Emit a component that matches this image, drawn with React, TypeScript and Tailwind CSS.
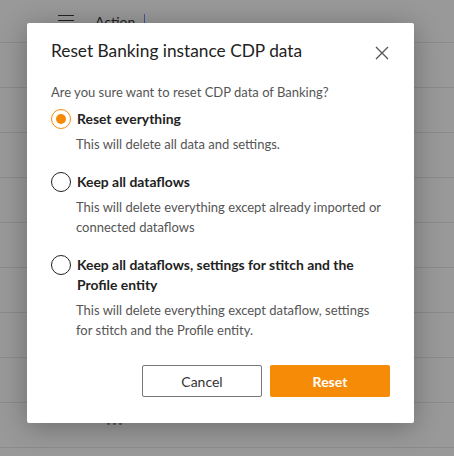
import React from "react";

const font = { fontFamily: "Lato, 'Noto Sans', sans-serif" };

function Radio({ checked }: { checked?: boolean }) {
  return checked ? (
    <span className="flex h-5 w-5 shrink-0 items-center justify-center rounded-full border-[1.5px] border-[#f58a07]">
      <span className="h-[10px] w-[10px] rounded-full bg-[#f58a07]" />
    </span>
  ) : (
    <span className="h-5 w-5 shrink-0 rounded-full border-[1.5px] border-[#222]" />
  );
}

function Option({
  checked,
  label,
  desc,
  className,
}: {
  checked?: boolean;
  label: React.ReactNode;
  desc: React.ReactNode;
  className?: string;
}) {
  return (
    <div className={className}>
      <div className="flex items-start gap-[6px]">
        <Radio checked={checked} />
        <div className="text-[13.9px] font-bold leading-5 text-[#222]">{label}</div>
      </div>
      <div className="mt-[5px] pl-[25px] pr-1 text-[13px] leading-5 text-[#555]">{desc}</div>
    </div>
  );
}

export default function App() {
  const rows = Array.from({ length: 9 });
  return (
    <div className="relative h-[456px] w-[454px] overflow-hidden bg-[#999]" style={font}>
      <div className="flex h-[43px] items-center border-b border-[#8b8b8b]">
        <div className="ml-[58px] flex w-4 flex-col gap-[4px] self-start pt-[15px]">
          <span className="h-[1px] bg-[#222]" />
          <span className="h-[1px] bg-[#222]" />
          <span className="h-[1px] bg-[#222]" />
        </div>
        <span className="ml-[21px] text-[14px] text-[#222]">Action</span>
        <span className="ml-[9px] h-[14px] w-[1px] bg-[#3a5a9a]" />
      </div>
      {rows.map((_, i) => (
        <div key={i} className="h-[45px] border-b border-[#8b8b8b]" />
      ))}
      <div className="absolute left-[107px] top-[422px] flex gap-[3px]">
        <span className="h-[3px] w-[3px] rounded-full bg-[#555]" />
        <span className="h-[3px] w-[3px] rounded-full bg-[#555]" />
        <span className="h-[3px] w-[3px] rounded-full bg-[#555]" />
      </div>

      <div className="absolute left-[27px] top-[23px] h-[400px] w-[387px] rounded-[2px] bg-white px-6 pt-4 shadow-[0_4px_28px_rgba(0,0,0,0.3)]">
        <div className="flex items-center justify-between">
          <h2 className="text-[17.3px] leading-6 text-[#222]">Reset Banking instance CDP data</h2>
          <svg width="14" height="14" viewBox="0 0 14 14" className="mr-[1px] mt-[3px]">
            <path d="M1 1L13 13M13 1L1 13" stroke="#555" strokeWidth="1.3" />
          </svg>
        </div>
        <p className="mt-[19px] text-[13px] leading-5 text-[#555]">
          Are you sure want to reset CDP data of Banking?
        </p>
        <Option
          className="mt-[7px]"
          checked
          label="Reset everything"
          desc="This will delete all data and settings."
        />
        <Option
          className="mt-[18px]"
          label="Keep all dataflows"
          desc="This will delete everything except already imported or connected dataflows"
        />
        <Option
          className="mt-[18px]"
          label="Keep all dataflows, settings for stitch and the Profile entity"
          desc="This will delete everything except dataflow, settings for stitch and the Profile entity."
        />
        <div className="mt-[25px] flex justify-end gap-2">
          <button className="h-[32px] w-[120px] rounded-[2px] border border-[#777] bg-white text-[14px] text-[#333]">
            Cancel
          </button>
          <button className="h-[32px] w-[120px] rounded-[2px] bg-[#f68b07] text-[14px] font-bold text-white">
            Reset
          </button>
        </div>
      </div>
    </div>
  );
}
